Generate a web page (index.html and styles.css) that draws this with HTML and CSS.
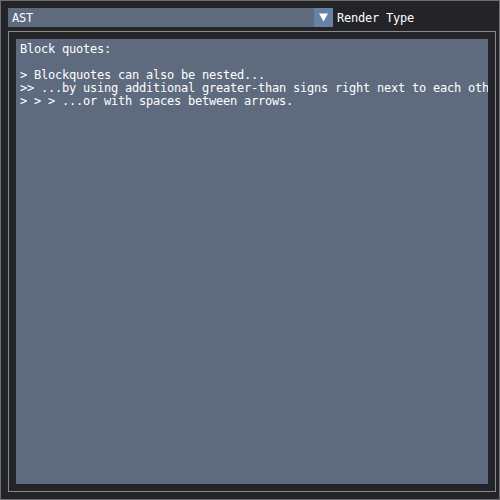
FILE: index.html
```html
<!DOCTYPE html>
<html>
<head>
<meta charset="utf-8">
<link rel="stylesheet" href="styles.css">
</head>
<body>
<div class="window">
  <div class="toolbar">
    <div class="combo">
      <div class="combo-value">AST</div>
      <div class="combo-arrow">
        <svg width="19" height="19" viewBox="0 0 19 19"><polygon points="5,5.6 14,5.6 9.5,13.4" fill="#ffffff"/></svg>
      </div>
    </div>
    <div class="label">Render Type</div>
  </div>
  <div class="child">
    <div class="textarea">Block quotes:

&gt; Blockquotes can also be nested...
&gt;&gt; ...by using additional greater-than signs right next to each other...
&gt; &gt; &gt; ...or with spaces between arrows.</div>
  </div>
</div>
</body>
</html>
```

FILE: styles.css
```css
html, body {
  margin: 0;
  padding: 0;
  background: #232428;
}
.window {
  box-sizing: border-box;
  width: 500px;
  height: 500px;
  border: 1px solid #6e6e70;
  padding: 7px 3px 7px 7px;
  background: #232428;
  display: flex;
  flex-direction: column;
  gap: 4px;
  font-family: "DejaVu Sans Mono", "Liberation Mono", monospace;
  font-size: 12px;
  letter-spacing: -0.225px;
  line-height: 13px;
  color: #ffffff;
}
.toolbar {
  display: flex;
  align-items: stretch;
  height: 19px;
  gap: 4px;
}
.combo {
  display: flex;
  width: 325px;
  height: 19px;
}
.combo-value {
  flex: 1;
  background: #5e6b7f;
  padding: 4px 4px 2px;
  white-space: pre;
}
.combo-arrow {
  width: 19px;
  height: 19px;
  background: #6682a6;
}
.combo-arrow svg {
  display: block;
}
.label {
  padding: 4px 0 2px;
  white-space: pre;
}
.child {
  flex: 1;
  box-sizing: border-box;
  border: 1px solid #8a8a8c;
  padding: 7px;
  display: flex;
  min-height: 0;
}
.textarea {
  flex: 1;
  background: #5e6b7f;
  padding: 4px 4px 2px;
  white-space: pre;
  overflow: hidden;
}
```
